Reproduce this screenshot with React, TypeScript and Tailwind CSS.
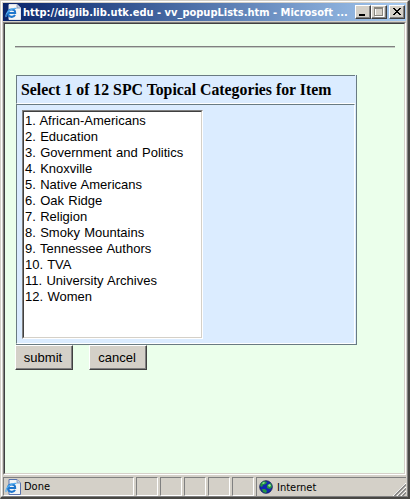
import React from "react";

const categories = [
  "African-Americans", "Education", "Government and Politics", "Knoxville",
  "Native Americans", "Oak Ridge", "Religion", "Smoky Mountains",
  "Tennessee Authors", "TVA", "University Archives", "Women",
];

function PageIcon({ edge }: { edge: string }) {
  return (
    <svg width="16" height="16" viewBox="0 0 16 16" className="block shrink-0">
      <path d="M4 .5h8l3.500 3.500v11.500H4z" fill="#f4f5f6" stroke={edge} />
      <path d="M12 .5V4h3.500" fill="#c3d3e8" stroke="#8190ac" strokeWidth=".8" />
      <path d="M3.500 9h6.700C10.200 4.500 3 4.300 3 9.200c0 4.400 5.600 4.700 7 1.600" fill="none" stroke="#1f76cc" strokeWidth="2" />
      <path d="M1.200 13C-.3 9.500 6 3.500 11.500 4.500" fill="none" stroke="#54adf0" strokeWidth="1.200" />
    </svg>
  );
}

function GlobeIcon() {
  return (
    <svg width="14" height="14" viewBox="0 0 14 14" className="block shrink-0">
      <circle cx="7" cy="7" r="6.300" fill="#1228b0" stroke="#101848" strokeWidth=".8" />
      <path d="M2 3l3-2 3 1-1 2-3 1-1 2-2-1zM8 5l4-2 1 4-2 2-3-1zM3 9l3 0 2 2-1 2-3-1z" fill="#259642" />
      <path d="M3 3l2-1 1 1-2 1zM9 5l2-1 1 2-2 1z" fill="#9ae79d" />
    </svg>
  );
}

function Caption({ kind, className = "" }: { kind: "min" | "max" | "close"; className?: string }) {
  return (
    <button className={`h-[14px] w-4 shrink-0 border border-t-white border-l-white border-r-[#404040] border-b-[#404040] bg-[#d4d0c8] shadow-[inset_-1px_-1px_#808080] ${className}`}>
      <svg width="14" height="12" viewBox="0 0 14 12" className="block" shapeRendering="crispEdges">
        {kind === "min" && <path d="M3 8h6v2H3z" fill="#000" />}
        {kind === "max" && (
          <>
            <path d="M3.500 2.500h8v8h-8z" fill="none" stroke="#fff" />
            <path d="M2 1h9v9H2zM3 3v6h7V3z" fill="#898780" fillRule="evenodd" />
          </>
        )}
        {kind === "close" && <path d="M3 2h2v1h1v1h2V3h1V2h2v1h-1v1H9v1H8v1h1v1h1v1h1v1H9V8H8V7H6v1H5v1H3V8h1V7h1V6h1V5H5V4H4V3H3z" fill="#000" />}
      </svg>
    </button>
  );
}

function FormButton({ label, className }: { label: string; className: string }) {
  return (
    <button className={`h-[25px] border border-t-white border-l-white border-r-[#404040] border-b-[#404040] bg-[#d4d0c8] pr-[2px] text-center text-[13px] leading-[22px] shadow-[inset_-1px_-1px_#808080] ${className}`}>
      {label}
    </button>
  );
}

const pane = "h-[19px] shrink-0 border border-t-[#808080] border-l-[#808080] border-r-white border-b-white";

export default function App() {
  return (
    <div className="flex h-[499px] w-[410px] flex-col overflow-hidden border-t border-r-2 border-b-2 border-l border-t-[#d4d0c8] border-r-[#484744] border-b-[#484744] border-l-[#d4d0c8] bg-[#d4d0c8] font-['Liberation_Sans',Arial,sans-serif] text-black">
      <div className="flex min-h-0 flex-1 flex-col border-t border-r border-b border-l border-t-white border-r-[#808080] border-b-[#808080] border-l-white px-px pt-px">
        <header className="flex h-[18px] shrink-0 items-center bg-linear-to-r from-[#0a246a] to-[#a6caf0] pr-px pl-[2px]">
          <PageIcon edge="#dfe4ec" />
          <div className="ml-[2px] w-[331px] overflow-hidden pt-px font-['DejaVu_Sans_Condensed','DejaVu_Sans',sans-serif] text-[11px] font-bold leading-[17px] whitespace-nowrap text-white">
            http://diglib.lib.utk.edu - vv_popupLists.htm - Microsoft ...
          </div>
          <div className="ml-auto flex">
            <Caption kind="min" />
            <Caption kind="max" />
            <Caption kind="close" className="ml-[2px]" />
          </div>
        </header>

        <main className="mt-px h-[453px] shrink-0 border border-t-[#808080] border-l-[#808080] border-r-white border-b-white">
          <div className="h-full border border-t-[#404040] border-l-[#404040] border-r-[#d4d0c8] border-b-[#d4d0c8] bg-[#ebffeb] pt-[22px] pr-[9px] pl-[10px]">
            <div className="h-[2px] border-t border-b border-t-[#808080] border-b-[#c3cec3]" />
            <section className="mt-[27px] ml-px w-[341px] border-r border-b border-[#697b82] bg-[#dbecff]">
              <h1 className="mr-px h-[29px] border-t border-b border-l border-t-[#697b82] border-b-white border-l-[#697b82] pl-1 font-['Liberation_Serif','Times_New_Roman',serif] text-[15.8px] font-bold leading-[28px] whitespace-nowrap">
                Select 1 of 12 SPC Topical Categories for Item
              </h1>
              <div className="mr-px h-[240px] border border-t-[#697b82] border-l-[#697b82] border-r-white border-b-white pt-[5px] pl-[5px]">
                <div className="h-[229px] w-[181px] border border-t-[#808080] border-l-[#808080] border-r-white border-b-white">
                  <ul className="h-full border border-t-[#404040] border-l-[#404040] border-r-[#d4d0c8] border-b-[#d4d0c8] bg-white pt-px pl-px text-[13px] leading-4 [word-spacing:0.7px]">
                    {categories.map((name, index) => (
                      <li key={name} className="whitespace-nowrap">{index + 1}. {name}</li>
                    ))}
                  </ul>
                </div>
              </div>
            </section>
            <div className="flex gap-4">
              <FormButton label="submit" className="w-[58px]" />
              <FormButton label="cancel" className="w-[58px]" />
            </div>
          </div>
        </main>

        <footer className="mt-[2px] flex h-[19px] gap-[2px] font-['DejaVu_Sans_Condensed','DejaVu_Sans',sans-serif] text-[11px] leading-[18px]">
          <div className={`${pane} flex w-[131px] items-center pl-px`}>
            <PageIcon edge="#5873ad" />
            <span className="ml-[3px] pt-px">Done</span>
          </div>
          <div className={`${pane} w-[22px]`} />
          <div className={`${pane} w-[22px]`} />
          <div className={`${pane} w-[22px]`} />
          <div className={`${pane} w-[22px]`} />
          <div className={`${pane} w-[22px]`} />
          <div className="flex h-[19px] flex-1 items-center border-t border-l border-[#808080] pl-[2px]">
            <GlobeIcon />
            <span className="ml-1 pt-px">Internet</span>
            <svg width="13" height="13" viewBox="0 0 13 13" className="ml-auto self-end">
              <path d="M0 13L13 0M4 13L13 4M8 13L13 8" stroke="#fff" />
              <path d="M1.500 13L13 1.500M5.500 13L13 5.500M9.500 13L13 9.500" stroke="#808080" strokeWidth="1.500" />
            </svg>
          </div>
        </footer>
      </div>
    </div>
  );
}
